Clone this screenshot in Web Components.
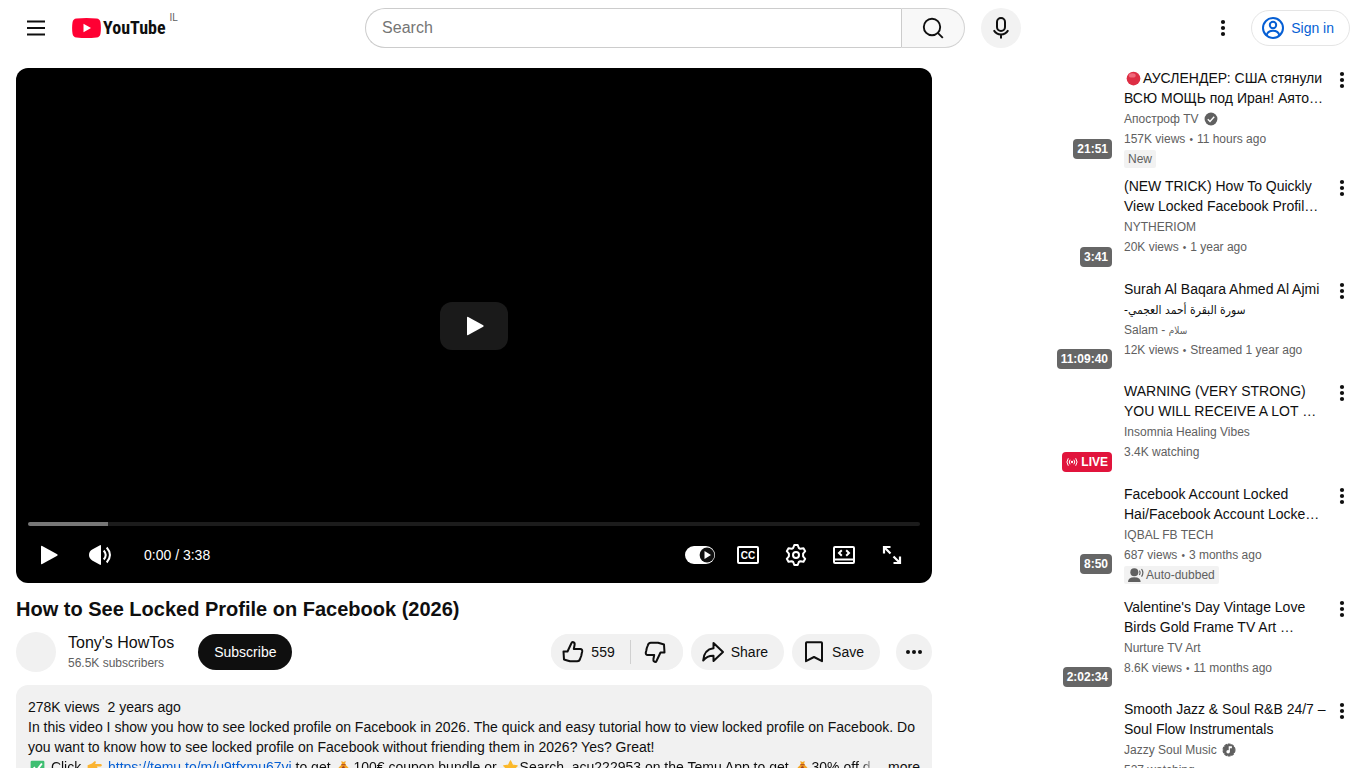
<!DOCTYPE html>
<html lang="en">
<head>
  <meta charset="utf-8">
  <meta name="viewport" content="width=device-width, initial-scale=1">
  <title>How to See Locked Profile on Facebook (2026) - YouTube</title>
  <style>
    html {
      scrollbar-width: none;
    }

    body {
      margin: 0;
      background: #fff;
      color: #0f0f0f;
      font-family: "Liberation Sans", Arial, sans-serif;
      font-size: 14px;
      line-height: 20px;
      --grey: #606060;
      --chip: #f1f1f1;
      --blue: #065fd4;
    }
  </style>
</head>
<body>
  <watch-page>
    <app-masthead slot="header" country="IL"></app-masthead>

    <video-player current="0:00" duration="3:38" buffered="9"></video-player>
    <video-info likes="559" subscribers="56.5K subscribers">
      How to See Locked Profile on Facebook (2026)
      <span slot="owner">Tony's HowTos</span>
    </video-info>
    <video-description views="278K views" date="2 years ago">
      In this video I show you how to see locked profile on Facebook in 2026. The quick and easy tutorial how to view locked profile on Facebook. Do you want to know how to see locked profile on Facebook without friending them in 2026? Yes? Great!
      <span slot="last"><app-icon name="check"></app-icon> Click <app-icon name="hand"></app-icon> <a href="https://temu.to/m/u9tfxmu67vj">https://temu.to/m/u9tfxmu67vj</a> to get <app-icon name="bag"></app-icon>100€ coupon bundle or <app-icon name="star"></app-icon>Search&nbsp; acu222953 on the Temu App to get <app-icon name="bag"></app-icon>30% off d</span>
    </video-description>

    <related-video slot="related" time="21:51" channel="Апостроф TV" badge="verified" meta="157K views • 11 hours ago" tag="New"><app-icon name="red-circle"></app-icon>АУСЛЕНДЕР: США стянули ВСЮ МОЩЬ под Иран! Аято…</related-video>
    <related-video slot="related" time="3:41" channel="NYTHERIOM" meta="20K views • 1 year ago">(NEW TRICK) How To Quickly View Locked Facebook Profil…</related-video>
    <related-video slot="related" time="11:09:40" channel="Salam - سلام" meta="12K views • Streamed 1 year ago">Surah Al Baqara Ahmed Al Ajmi <span lang="ar">-سورة البقرة أحمد العجمي</span></related-video>
    <related-video slot="related" live channel="Insomnia Healing Vibes" meta="3.4K watching">WARNING (VERY STRONG) YOU WILL RECEIVE A LOT …</related-video>
    <related-video slot="related" time="8:50" channel="IQBAL FB TECH" meta="687 views • 3 months ago" tag="Auto-dubbed" tag-icon="dubbed">Facebook Account Locked Hai/Facebook Account Locke…</related-video>
    <related-video slot="related" time="2:02:34" channel="Nurture TV Art" meta="8.6K views • 11 months ago">Valentine's Day Vintage Love Birds Gold Frame TV Art …</related-video>
    <related-video slot="related" live channel="Jazzy Soul Music" badge="artist" meta="527 watching">Smooth Jazz &amp; Soul R&amp;B 24/7 – Soul Flow Instrumentals</related-video>
  </watch-page>

  <script>
    // [viewBox, markup]
    const ICONS = {
      menu: ['0 0 24 24', '<path d="M3 5.5h18M3 12h18M3 18.5h18" stroke="currentColor" stroke-width="1.8"/>'],
      search: ['0 0 24 24', '<g fill="none" stroke="currentColor" stroke-width="1.9"><circle cx="11" cy="11" r="8.2"/><path d="m16.8 16.8 5 5"/></g>'],
      mic: ['0 0 24 24', '<g fill="none" stroke="currentColor" stroke-width="2"><rect x="8" y="2" width="8" height="13" rx="4"/><path d="M4.8 14.3c1.7 2.9 4.1 4.2 7.2 4.2s5.5-1.3 7.2-4.2M12 18.5v4"/></g>'],
      dots: ['0 0 24 24', '<g fill="currentColor"><circle cx="12" cy="6" r="2.1"/><circle cx="12" cy="12" r="2.1"/><circle cx="12" cy="18" r="2.1"/></g>'],
      more: ['0 0 24 24', '<g fill="currentColor"><circle cx="6" cy="12" r="2"/><circle cx="12" cy="12" r="2"/><circle cx="18" cy="12" r="2"/></g>'],
      user: ['0 0 24 24', '<g fill="none" stroke="currentColor" stroke-width="2"><circle cx="12" cy="12" r="10"/><circle cx="12" cy="9" r="3.2"/><path d="M5.5 19.4c.8-3 3.3-4.7 6.5-4.7s5.7 1.7 6.5 4.7"/></g>'],
      play: ['0 0 24 24', '<path fill="currentColor" d="M5 3.5Q5 2.3 6.2 2.9L21.2 11.3Q22.3 12 21.2 12.7L6.2 21.1Q5 21.7 5 20.5Z"/>'],
      volume: ['0 0 24 24', '<path fill="currentColor" d="M12 2.3Q13 1.7 13 2.9V21.1Q13 22.3 12 21.7L4.2 17.4Q1 15.4 1 12T4.2 6.6Z"/><g fill="none" stroke="currentColor" stroke-width="2"><path d="M15.7 7.5q4 4.5 0 9M18.7 4.5q6.5 7.5 0 15"/></g>'],
      autoplay: ['0 0 32 24', '<rect x="1" y="3" width="30" height="18" rx="9" fill="currentColor"/><circle cx="23" cy="12" r="7.4" fill="#0f0f0f"/><path d="m20.5 8 6.5 4-6.5 4z" fill="currentColor"/>'],
      cc: ['0 0 24 24', '<rect x="2" y="4" width="20" height="16" rx="1" fill="none" stroke="currentColor" stroke-width="2"/><text x="12" y="16" text-anchor="middle" font-family="Liberation Sans, sans-serif" font-size="10" font-weight="700" fill="currentColor">CC</text>'],
      gear: ['0 0 24 24', '<g fill="none" stroke="currentColor" stroke-width="2" stroke-linejoin="round"><path d="M10.3 2h3.4l1.1 3 1.5.8 3.2-.6 1.7 3-2.1 2.5v2.6l2.1 2.5-1.7 3-3.2-.6-1.5.8-1.1 3h-3.4l-1.1-3-1.5-.8-3.2.6-1.7-3 2.1-2.5v-2.6L2.8 8.2l1.7-3 3.2.6 1.5-.8z"/><circle cx="12" cy="12" r="3"/></g>'],
      theater: ['0 0 24 24', '<g fill="none" stroke="currentColor" stroke-width="2"><rect x="2" y="4" width="20" height="16" rx="1"/><path d="M2 16.5h20M9.8 7.3 7 10l2.8 2.7M14.2 7.3 17 10l-2.8 2.7"/></g>'],
      full: ['0 0 24 24', '<g fill="none" stroke="currentColor" stroke-width="2.2"><path d="M4 10.5V4h6.5M4 4l6.5 6.5M20 13.5V20h-6.5M20 20l-6.5-6.5"/></g>'],
      like: ['0 0 24 24', '<path fill="none" stroke="currentColor" stroke-width="2" stroke-linejoin="round" d="M2.5 11.5h4L10.5 3q.5-1.2 1.8-.8 1.7.6 1.3 2.5L12.8 9h6.4q2.3.2 2 2.5l-.5 2-.5 2.5-1 2.5q-.6 2.8-3 2.8H9q-2.5-.8-6-1.8z"/>'],
      share: ['0 0 24 24', '<path fill="none" stroke="currentColor" stroke-width="2" stroke-linejoin="round" d="M12.5 3 22 12l-9.5 9v-5.2Q6.5 15.5 2.2 20.5 3 9.5 12.5 8.3z"/>'],
      save: ['0 0 24 24', '<path fill="none" stroke="currentColor" stroke-width="2" stroke-linejoin="round" d="M4 3q0-.8.8-.8h14.4q.8 0 .8.8v18.2l-8-4.2-8 4.2z"/>'],
      verified: ['0 0 24 24', '<circle cx="12" cy="12" r="11" fill="currentColor"/><path d="m6.5 12.5 3.8 3.8 7.2-8" fill="none" stroke="#fff" stroke-width="2.4"/>'],
      artist: ['0 0 24 24', '<circle cx="12" cy="12" r="10.2" fill="currentColor" stroke="currentColor" stroke-width="2" stroke-dasharray="5 1.4"/><circle cx="10.5" cy="15" r="3" fill="#fff"/><path d="M11.5 15V5.5H17V9h-3.5v6z" fill="#fff"/>'],
      live: ['0 0 24 24', '<circle cx="12" cy="12" r="2.3" fill="currentColor"/><g fill="none" stroke="currentColor" stroke-width="2"><path d="M8.2 7.5q-3.5 4.5 0 9M15.8 7.5q3.5 4.5 0 9M4.6 4.5q-5.5 7.5 0 15M19.4 4.5q5.5 7.5 0 15"/></g>'],
      dubbed: ['0 0 24 24', '<circle cx="9.5" cy="8" r="6" fill="currentColor"/><path d="M0 22.5Q0 15.5 9.5 15.5T19 22.5z" fill="currentColor"/><g fill="none" stroke="currentColor" stroke-width="1.8"><path d="M17 5.5q2.2 3 0 6.5M20.3 3q4 5.5 0 11.5"/></g>'],
      'red-circle': ['0 0 24 24', '<circle cx="12" cy="12" r="11" fill="#dd2e44"/><ellipse cx="10" cy="7" rx="5.5" ry="3.5" fill="#f0687a"/>'],
      check: ['0 0 24 24', '<rect x="1" y="1" width="22" height="22" rx="2" fill="#3fbf72"/><path d="m6 11.5 4.5 5.5L19 5.5" fill="none" stroke="#fff" stroke-width="3"/>'],
      hand: ['0 0 24 24', '<path fill="#fbb431" d="M1 8.5 8 5.5l4-3.5q2.5-.6 2.2 1.5L13 6.5h9q1.8.3 1.8 2T22 10.5h-6.5q1.8 1 .8 2.8 1 1.3-.3 2.9.5 1.8-1.5 2.6-.6 2.2-2.8 2.2H7.5L1 19z"/>'],
      bag: ['0 0 24 24', '<path fill="#f6a623" d="M8.5 1.5 12 3l3.5-1.5L14.5 7q8 6 7.5 12-.4 3.5-4 3.5H6q-3.6 0-4-3.5Q1.5 13 9.5 7z"/><path d="M8.5 7.5h7" stroke="#b5541c" stroke-width="2"/><path d="M14.5 11.5q-4.5-1-4.5 1.5t2.5 2.2q2.5.3 1.7 2.6-1 1.7-4.7.7M12 10v10" fill="none" stroke="#a8401c" stroke-width="1.8"/>'],
      star: ['0 0 24 24', '<path fill="#fbb829" stroke="#fbb829" stroke-width="2" stroke-linejoin="round" d="m12 1.5 3.2 6.8 7.5.9-5.5 5.1 1.4 7.4-6.6-3.6-6.6 3.6 1.4-7.4-5.5-5.1 7.5-.9z"/>']
    };

    class AppIcon extends HTMLElement {
      constructor() {
        super();
        this.attachShadow({ mode: 'open' });
      }

      connectedCallback() {
        const [box, shapes] = ICONS[this.getAttribute('name')];
        this.shadowRoot.innerHTML = `
          <style>
            :host {
              display: inline-block;
              flex: none;
              width: 24px;
              height: 24px;
            }

            svg {
              display: block;
              width: 100%;
              height: 100%;
            }
          </style>
          <svg viewBox="${box}" aria-hidden="true">${shapes}</svg>
        `;
      }
    }

    customElements.define('app-icon', AppIcon);

    class WatchPage extends HTMLElement {
      constructor() {
        super();
        this.attachShadow({ mode: 'open' });
      }

      connectedCallback() {
        this.shadowRoot.innerHTML = `
          <style>
            :host {
              display: block;
            }

            .columns {
              display: grid;
              grid-template-columns: minmax(0, 1fr) 406px;
              column-gap: 16px;
              padding: 12px 12px 0 16px;
            }

            aside {
              display: flex;
              flex-direction: column;
              gap: 8px;
            }
          </style>
          <slot name="header"></slot>
          <div class="columns">
            <main><slot></slot></main>
            <aside><slot name="related"></slot></aside>
          </div>
        `;
      }
    }

    customElements.define('watch-page', WatchPage);

    class AppMasthead extends HTMLElement {
      constructor() {
        super();
        this.attachShadow({ mode: 'open' });
      }

      connectedCallback() {
        this.shadowRoot.innerHTML = `
          <style>
            :host {
              display: flex;
              align-items: center;
              justify-content: space-between;
              height: 56px;
              padding: 0 16px;
            }

            button {
              display: flex;
              flex: none;
              align-items: center;
              justify-content: center;
              box-sizing: border-box;
              width: 40px;
              height: 40px;
              padding: 0;
              border: 0;
              border-radius: 20px;
              background: none;
              color: inherit;
              font: inherit;
            }

            .start, .end, .center, form {
              display: flex;
              align-items: center;
            }

            .start {
              gap: 16px;
              width: 167px;
            }

            .logo {
              display: flex;
              flex: none;
              align-items: center;
              gap: 2px;
              color: #0f0f0f;
              text-decoration: none;
            }

            .logo svg {
              width: 29px;
              height: 20px;
            }

            .word {
              font-family: "Roboto Condensed", Roboto, sans-serif;
              font-size: 18px;
              font-weight: 700;
            }

            .country {
              align-self: flex-start;
              margin: -10px 0 0 2px;
              color: var(--grey);
              font-size: 10px;
            }

            .center {
              flex: 0 1 656px;
              gap: 16px;
            }

            form {
              flex: 1;
            }

            input {
              flex: 1;
              box-sizing: border-box;
              min-width: 0;
              height: 40px;
              padding: 0 16px;
              border: 1px solid #ccc;
              border-right: 0;
              border-radius: 20px 0 0 20px;
              font: inherit;
              font-size: 16px;
            }

            input::placeholder {
              color: #757575;
            }

            .go {
              width: 64px;
              border: 1px solid #d3d3d3;
              border-left-color: #ccc;
              border-radius: 0 20px 20px 0;
              background: #f8f8f8;
            }

            .mic {
              background: #f2f2f2;
            }

            .end {
              gap: 8px;
            }

            .signin {
              display: flex;
              align-items: center;
              gap: 6px;
              height: 34px;
              padding: 0 15px 0 9px;
              border: 1px solid #e5e5e5;
              border-radius: 18px;
              color: var(--blue);
              text-decoration: none;
            }
          </style>
          <div class="start">
            <button aria-label="Guide"><app-icon name="menu"></app-icon></button>
            <a class="logo" href="#" aria-label="YouTube Home">
              <svg viewBox="0 0 29 20" aria-hidden="true">
                <path fill="#f03" d="M4.5.5Q14.5-.5 24.5.5 28 .8 28.5 4.5 29.3 10 28.5 15.5 28 19.2 24.5 19.5 14.5 20.5 4.5 19.5 1 19.2.5 15.5-.3 10 .5 4.5 1 .8 4.5.5z"/>
                <path fill="#fff" d="M11.5 5.7 19 10l-7.5 4.3z"/>
              </svg>
              <span class="word">YouTube</span>
              <span class="country">${this.getAttribute('country')}</span>
            </a>
          </div>
          <div class="center">
            <form role="search">
              <input type="text" placeholder="Search" aria-label="Search">
              <button class="go" type="button" aria-label="Search"><app-icon name="search"></app-icon></button>
            </form>
            <button class="mic" aria-label="Search with your voice"><app-icon name="mic"></app-icon></button>
          </div>
          <div class="end">
            <button aria-label="Settings"><app-icon name="dots"></app-icon></button>
            <a class="signin" href="#"><app-icon name="user"></app-icon>Sign in</a>
          </div>
        `;
      }
    }

    customElements.define('app-masthead', AppMasthead);

    class VideoPlayer extends HTMLElement {
      constructor() {
        super();
        this.attachShadow({ mode: 'open' });
      }

      connectedCallback() {
        const buffered = this.getAttribute('buffered');
        this.shadowRoot.innerHTML = `
          <style>
            :host {
              display: grid;
              aspect-ratio: 16 / 9;
              border-radius: 12px;
              background: #000;
              color: #fff;
            }

            .big, .bottom {
              grid-area: 1 / 1;
            }

            button {
              display: flex;
              align-items: center;
              justify-content: center;
              width: 48px;
              height: 48px;
              padding: 0;
              border: 0;
              background: none;
              color: inherit;
            }

            .big {
              place-self: center;
              width: 68px;
              border-radius: 12px;
              background: #1a1a1a;
            }

            .bottom {
              align-self: end;
              padding: 0 12px 4px;
            }

            input {
              display: block;
              appearance: none;
              width: 100%;
              height: 4px;
              margin: 0 0 5px;
              border-radius: 2px;
              background: linear-gradient(to right, #777 ${buffered}%, #1c1c1c ${buffered}%);
            }

            input::-webkit-slider-thumb {
              appearance: none;
              width: 0;
              height: 4px;
            }

            .controls {
              display: flex;
              align-items: center;
              padding: 0 4px 0 0;
            }

            .volume {
              margin: 0 20px 0 0;
            }

            .play {
              margin-right: 4px;
              margin-left: -4px;
            }

            .time {
              margin-right: auto;
            }

            .auto app-icon {
              width: 32px;
            }
          </style>
          <button class="big" aria-label="Play"><app-icon name="play"></app-icon></button>
          <div class="bottom">
            <input type="range" min="0" max="218" value="0" aria-label="Seek">
            <div class="controls">
              <button class="play" aria-label="Play"><app-icon name="play"></app-icon></button>
              <button class="volume" aria-label="Mute"><app-icon name="volume"></app-icon></button>
              <span class="time">${this.getAttribute('current')} / ${this.getAttribute('duration')}</span>
              <button class="auto" aria-label="Autoplay" aria-pressed="true"><app-icon name="autoplay"></app-icon></button>
              <button aria-label="Subtitles"><app-icon name="cc"></app-icon></button>
              <button aria-label="Settings"><app-icon name="gear"></app-icon></button>
              <button aria-label="Theater mode"><app-icon name="theater"></app-icon></button>
              <button aria-label="Full screen"><app-icon name="full"></app-icon></button>
            </div>
          </div>
        `;
      }
    }

    customElements.define('video-player', VideoPlayer);

    class VideoInfo extends HTMLElement {
      constructor() {
        super();
        this.attachShadow({ mode: 'open' });
      }

      connectedCallback() {
        this.shadowRoot.innerHTML = `
          <style>
            :host {
              display: block;
              margin-top: 12px;
            }

            h1 {
              margin: 0 0 8px;
              font-size: 20px;
              font-weight: 700;
              line-height: 28px;
            }

            .row, .owner, .actions, .pair {
              display: flex;
              align-items: center;
            }

            .row {
              justify-content: space-between;
              height: 42px;
            }

            .avatar {
              width: 40px;
              height: 40px;
              margin-right: 12px;
              border-radius: 50%;
              background: var(--chip);
            }

            .name {
              font-size: 16px;
              line-height: 22px;
            }

            .subs {
              color: var(--grey);
              font-size: 12px;
              line-height: 18px;
            }

            button {
              display: flex;
              align-items: center;
              gap: 6px;
              height: 36px;
              padding: 0 16px 0 10px;
              border: 0;
              border-radius: 18px;
              background: var(--chip);
              color: inherit;
              font: inherit;
            }

            .subscribe {
              margin-left: 24px;
              padding: 0 16px;
              background: #0f0f0f;
              color: #fff;
            }

            .actions {
              gap: 8px;
            }

            .like {
              border-radius: 18px 0 0 18px;
            }

            .dislike {
              padding: 0 16px 0 12px;
              border-radius: 0 18px 18px 0;
            }

            .dislike app-icon {
              transform: rotate(180deg);
            }

            .pair {
              background: var(--chip);
              border-radius: 18px;
            }

            .line {
              width: 1px;
              height: 24px;
              margin-left: -1px;
              background: #d0d0d0;
            }

            .more {
              margin-left: 8px;
              padding: 0 6px;
            }
          </style>
          <h1><slot></slot></h1>
          <div class="row">
            <div class="owner">
              <div class="avatar"></div>
              <div>
                <div class="name"><slot name="owner"></slot></div>
                <div class="subs">${this.getAttribute('subscribers')}</div>
              </div>
              <button class="subscribe">Subscribe</button>
            </div>
            <div class="actions">
              <div class="pair">
                <button class="like"><app-icon name="like"></app-icon>${this.getAttribute('likes')}</button>
                <span class="line"></span>
                <button class="dislike" aria-label="Dislike"><app-icon name="like"></app-icon></button>
              </div>
              <button><app-icon name="share"></app-icon>Share</button>
              <button><app-icon name="save"></app-icon>Save</button>
              <button class="more" aria-label="More actions"><app-icon name="more"></app-icon></button>
            </div>
          </div>
        `;
      }
    }

    customElements.define('video-info', VideoInfo);

    class VideoDescription extends HTMLElement {
      constructor() {
        super();
        this.attachShadow({ mode: 'open' });
      }

      connectedCallback() {
        this.shadowRoot.innerHTML = `
          <style>
            :host {
              display: block;
              margin-top: 12px;
              padding: 12px;
              border-radius: 12px;
              background: var(--chip);
            }

            .head {
              display: flex;
              gap: 8px;
            }

            .last {
              display: flex;
            }

            .text {
              flex: 1;
              min-width: 0;
              overflow: hidden;
              white-space: nowrap;
              mask-image: linear-gradient(to left, transparent, #000 16px);
            }

            button {
              padding: 0;
              border: 0;
              background: none;
              color: inherit;
              font: inherit;
            }
          </style>
          <div class="head">
            <span>${this.getAttribute('views')}</span>
            <span>${this.getAttribute('date')}</span>
          </div>
          <div><slot></slot></div>
          <div class="last">
            <div class="text"><slot name="last"></slot></div>
            <button>...more</button>
          </div>
        `;
        // emoji and links are nested too deep for ::slotted, so they are styled here
        this.querySelectorAll('app-icon').forEach((icon) => {
          icon.style.cssText = 'width: 15px; height: 15px; margin: 0 2px; vertical-align: -3px';
        });
        this.querySelectorAll('a').forEach((link) => {
          link.style.cssText = 'color: var(--blue); text-decoration: none';
        });
      }
    }

    customElements.define('video-description', VideoDescription);

    class RelatedVideo extends HTMLElement {
      constructor() {
        super();
        this.attachShadow({ mode: 'open' });
      }

      connectedCallback() {
        const badge = this.getAttribute('badge');
        const tag = this.getAttribute('tag');
        const tagIcon = this.getAttribute('tag-icon');
        const channel = this.getAttribute('channel').replace(/[\u0600-\u06FF]+/, '<bdi>$&</bdi>');
        const meta = this.getAttribute('meta').replace(' • ', '<span class="dot">•</span>');
        const time = this.hasAttribute('live')
          ? '<span class="time live"><app-icon name="live"></app-icon>LIVE</span>'
          : `<span class="time">${this.getAttribute('time')}</span>`;
        this.shadowRoot.innerHTML = `
          <style>
            :host {
              display: grid;
              grid-template-columns: 168px minmax(0, 1fr) 24px;
              align-items: start;
            }

            .thumb {
              display: flex;
              align-items: flex-end;
              justify-content: flex-end;
              box-sizing: border-box;
              aspect-ratio: 16 / 9;
              padding: 4px;
            }

            .time {
              display: flex;
              align-items: center;
              gap: 3px;
              padding: 0 4px;
              border-radius: 4px;
              background: #666;
              color: #fff;
              font-size: 12px;
              font-weight: 700;
            }

            .live {
              background: #e1143c;
            }

            .live app-icon {
              width: 12px;
              height: 12px;
            }

            .details {
              padding-left: 8px;
              color: var(--grey);
              font-size: 12px;
            }

            h3 {
              margin: 0 0 1px;
              color: #0f0f0f;
              font-size: 14px;
              font-weight: 400;
            }

            ::slotted(app-icon) {
              width: 15px;
              height: 15px;
              margin: 0 2px;
              vertical-align: -3px;
            }

            ::slotted(span), bdi {
              font-family: "DejaVu Sans Condensed", "DejaVu Sans", sans-serif;
              font-size: 12px;
              line-height: 1;
            }

            .channel {
              display: flex;
              align-items: center;
              gap: 5px;
              height: 20px;
            }

            .channel bdi {
              font-size: 10px;
            }

            .channel app-icon {
              width: 14px;
              height: 14px;
            }

            .dot {
              margin: 0 4px;
              font-size: 10px;
              line-height: 1;
            }

            .tag {
              display: inline-flex;
              align-items: center;
              gap: 2px;
              height: 18px;
              padding: 0 4px;
              border-radius: 2px;
              background: #f2f2f2;
            }

            .tags {
              display: flex;
              padding-top: 1px;
            }

            .wide {
              padding-bottom: 5px;
            }

            .tag app-icon {
              width: 16px;
              height: 16px;
            }

            button {
              width: 24px;
              height: 24px;
              padding: 0;
              border: 0;
              background: none;
              color: #0f0f0f;
            }
          </style>
          <div class="thumb">${time}</div>
          <div class="details">
            <h3><slot></slot></h3>
            <div class="channel">
              <span>${channel}</span>
              ${badge ? `<app-icon name="${badge}"></app-icon>` : ''}
            </div>
            <div>${meta}</div>
            ${tag ? `<div class="tags ${tagIcon ? 'wide' : ''}"><span class="tag">${tagIcon ? `<app-icon name="${tagIcon}"></app-icon>` : ''}${tag}</span></div>` : ''}
          </div>
          <button aria-label="More actions"><app-icon name="dots"></app-icon></button>
        `;
      }
    }

    customElements.define('related-video', RelatedVideo);
  </script>
</body>
</html>
